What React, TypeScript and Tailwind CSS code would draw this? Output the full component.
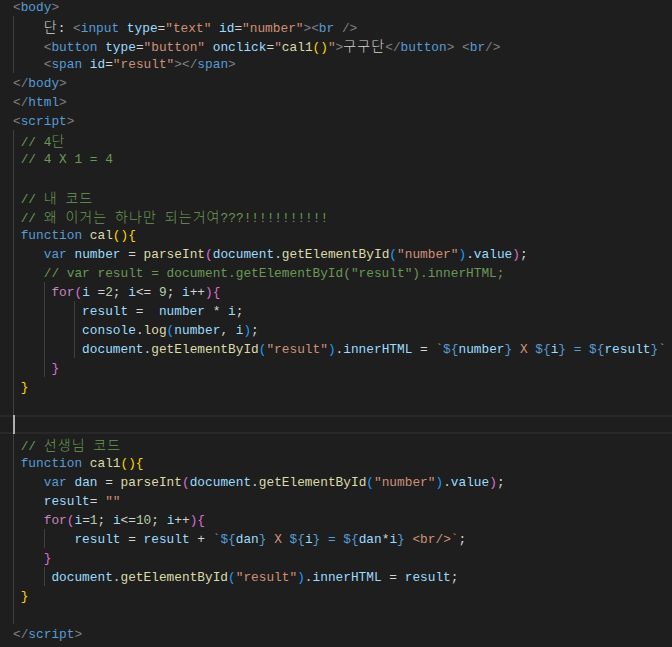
import React from "react";

type Tok = [string, string];
type Line = { ind: number; g: number; toks: Tok[]; cursor?: boolean };

const C: Record<string, string> = {
  g: "text-[#808080]",
  t: "text-[#569cd6]",
  a: "text-[#9cdcfe]",
  s: "text-[#ce9178]",
  x: "text-[#d4d4d4]",
  c: "text-[#6a9955]",
  k: "text-[#569cd6]",
  f: "text-[#dcdcaa]",
  v: "text-[#9cdcfe]",
  n: "text-[#b5cea8]",
  p: "text-[#c586c0]",
  y: "text-[#ffd700]",
  o: "text-[#da70d6]",
  b: "text-[#179fff]",
};

const L = (ind: number, g: number, ...toks: Tok[]): Line => ({ ind, g, toks });

const lines: Line[] = [
  L(0, 0, ["<", "g"], ["body", "t"], [">", "g"]),
  L(4, 1, ["단: ", "x"], ["<", "g"], ["input", "t"], [" ", "x"], ["type", "a"], ["=", "x"], ['"text"', "s"], [" ", "x"], ["id", "a"], ["=", "x"], ['"number"', "s"], ["><", "g"], ["br", "t"], [" />", "g"]),
  L(4, 1, ["<", "g"], ["button", "t"], [" ", "x"], ["type", "a"], ["=", "x"], ['"button"', "s"], [" ", "x"], ["onclick", "a"], ["=", "x"], ['"', "s"], ["cal1", "f"], ["()", "y"], ['"', "s"], [">", "g"], ["구구단", "x"], ["</", "g"], ["button", "t"], [">", "g"], [" ", "x"], ["<", "g"], ["br", "t"], ["/>", "g"]),
  L(4, 1, ["<", "g"], ["span", "t"], [" ", "x"], ["id", "a"], ["=", "x"], ['"result"', "s"], ["></", "g"], ["span", "t"], [">", "g"]),
  L(0, 0, ["</", "g"], ["body", "t"], [">", "g"]),
  L(0, 0, ["</", "g"], ["html", "t"], [">", "g"]),
  L(0, 0, ["<", "g"], ["script", "t"], [">", "g"]),
  L(1, 1, ["// 4단", "c"]),
  L(1, 1, ["// 4 X 1 = 4", "c"]),
  L(0, 1),
  L(1, 1, ["// 내 코드", "c"]),
  L(1, 1, ["// 왜 이거는 하나만 되는거여???!!!!!!!!!!!", "c"]),
  L(1, 1, ["function", "k"], [" ", "x"], ["cal", "f"], ["(){", "y"]),
  L(4, 1, ["var", "k"], [" ", "x"], ["number", "v"], [" = ", "x"], ["parseInt", "f"], ["(", "o"], ["document", "v"], [".", "x"], ["getElementById", "f"], ["(", "b"], ['"number"', "s"], [")", "b"], [".", "x"], ["value", "v"], [")", "o"], [";", "x"]),
  L(4, 1, ['// var result = document.getElementById("result").innerHTML;', "c"]),
  L(5, 2, ["for", "p"], ["(", "o"], ["i", "v"], [" =", "x"], ["2", "n"], ["; ", "x"], ["i", "v"], ["<= ", "x"], ["9", "n"], ["; ", "x"], ["i", "v"], ["++", "x"], ["){", "o"]),
  L(9, 3, ["result", "v"], [" =  ", "x"], ["number", "v"], [" * ", "x"], ["i", "v"], [";", "x"]),
  L(9, 3, ["console", "v"], [".", "x"], ["log", "f"], ["(", "b"], ["number", "v"], [", ", "x"], ["i", "v"], [")", "b"], [";", "x"]),
  L(9, 3, ["document", "v"], [".", "x"], ["getElementById", "f"], ["(", "b"], ['"result"', "s"], [")", "b"], [".", "x"], ["innerHTML", "v"], [" = ", "x"], ["`", "s"], ["${", "t"], ["number", "v"], ["}", "t"], [" X ", "s"], ["${", "t"], ["i", "v"], ["}", "t"], [" = ", "t"], ["${", "t"], ["result", "v"], ["}", "t"], ["`", "s"]),
  L(5, 2, ["}", "o"]),
  L(1, 1, ["}", "y"]),
  L(0, 1),
  { ind: 0, g: 0, toks: [], cursor: true },
  L(1, 1, ["// 선생님 코드", "c"]),
  L(1, 1, ["function", "k"], [" ", "x"], ["cal1", "f"], ["(){", "y"]),
  L(4, 1, ["var", "k"], [" ", "x"], ["dan", "v"], [" = ", "x"], ["parseInt", "f"], ["(", "o"], ["document", "v"], [".", "x"], ["getElementById", "f"], ["(", "b"], ['"number"', "s"], [")", "b"], [".", "x"], ["value", "v"], [")", "o"], [";", "x"]),
  L(4, 1, ["result", "v"], ["= ", "x"], ['""', "s"]),
  L(4, 1, ["for", "p"], ["(", "o"], ["i", "v"], ["=", "x"], ["1", "n"], ["; ", "x"], ["i", "v"], ["<=", "x"], ["10", "n"], ["; ", "x"], ["i", "v"], ["++", "x"], ["){", "o"]),
  L(8, 2, ["result", "v"], [" = ", "x"], ["result", "v"], [" + ", "x"], ["`", "s"], ["${", "t"], ["dan", "v"], ["}", "t"], [" X ", "s"], ["${", "t"], ["i", "v"], ["}", "t"], [" = ", "t"], ["${", "t"], ["dan", "v"], ["*", "x"], ["i", "v"], ["}", "t"], [" <br/>", "s"], ["`", "s"], [";", "x"]),
  L(4, 1, ["}", "o"]),
  L(5, 2, ["document", "v"], [".", "x"], ["getElementById", "f"], ["(", "b"], ['"result"', "s"], [")", "b"], [".", "x"], ["innerHTML", "v"], [" = ", "x"], ["result", "v"], [";", "x"]),
  L(1, 1, ["}", "y"]),
  L(0, 1),
  L(0, 0, ["</", "g"], ["script", "t"], [">", "g"]),
];

const SEG: Record<number, string> = {
  0: "w-0",
  1: "w-[7.68px]",
  4: "w-[30.72px]",
};

function TextRun({ text, color }: { text: string; color: string }) {
  const parts = text.split(/([\uac00-\ud7a3]+)/);
  return (
    <span className={C[color]}>
      {parts.map((p, i) =>
        /[\uac00-\ud7a3]/.test(p) ? (
          <span key={i} className="text-[14px] font-light tracking-[1.1px] font-['Noto_Sans_CJK_KR',sans-serif]">
            {p}
          </span>
        ) : (
          <React.Fragment key={i}>{p}</React.Fragment>
        )
      )}
    </span>
  );
}

function CodeLine({ line }: { line: Line }) {
  if (line.cursor) {
    return (
      <div className="flex h-[19px] pl-[13px] shadow-[inset_0_2px_0_#282828,inset_0_-2px_0_#282828]">
        <div className="w-[2px] shrink-0 bg-[#aeafad]" />
      </div>
    );
  }
  const segs: number[] = [];
  let rest = line.ind;
  for (let i = 0; i < line.g; i++) {
    const w = i < line.g - 1 ? 4 : Math.max(0, rest);
    segs.push(w);
    rest -= w;
  }
  const trailing = rest;
  return (
    <div className="flex h-[19px] pl-[13px]">
      {segs.map((w, i) => (
        <div key={i} className={`${SEG[w]} shrink-0 border-l border-[#404040]`} />
      ))}
      {trailing > 0 && <div className={`${SEG[trailing] ?? ""} shrink-0`} style={SEG[trailing] ? undefined : { width: trailing * 7.68 }} />}
      <div className="shrink-0 whitespace-pre pt-px leading-[19px]">
        {line.toks.map(([txt, col], i) => (
          <TextRun key={i} text={txt} color={col} />
        ))}
      </div>
    </div>
  );
}

export default function App() {
  return (
    <div className="h-[647px] w-[672px] overflow-hidden bg-[#1e1e1e] font-['Liberation_Mono','Noto_Sans_CJK_KR',monospace] text-[12.8px] text-[#d4d4d4]">
      <div className="mt-[-3px]">
        {lines.map((l, i) => (
          <CodeLine key={i} line={l} />
        ))}
      </div>
    </div>
  );
}
